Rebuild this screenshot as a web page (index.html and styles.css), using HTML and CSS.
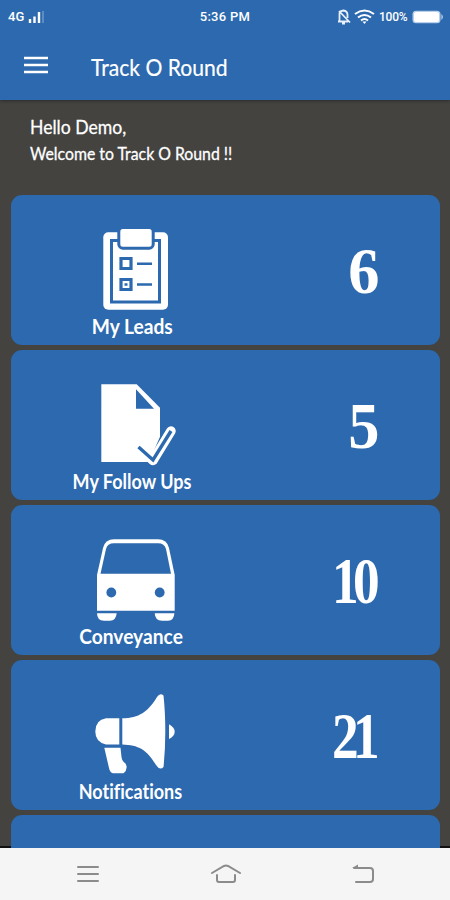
FILE: index.html
```html
<!DOCTYPE html>
<html lang="en">
<head>
<meta charset="utf-8">
<title>Track O Round</title>
<link rel="stylesheet" href="styles.css">
</head>
<body>
<div class="phone">
  <header class="top">
    <div class="status">
      <div class="carrier"><span>4G</span>
        <svg width="16" height="14" viewBox="0 0 16 14"><path d="M2 13V9M6.500 13V6.500M11 13V2" stroke="#fff" stroke-width="2.400"/><path d="M15 13V1" stroke="#6d98ca" stroke-width="1.500"/></svg>
      </div>
      <span class="clock">5:36 PM</span>
      <div class="indicators">
        <svg width="14" height="16" viewBox="0 0 14 16" fill="none" stroke="#e8f1fb" stroke-width="1.800"><path d="M2.500 12.500V4.500Q2.500 2 6.500 1.500Q10.500 2 10.500 6V9M1 12.500H11M5 14.500H8M2 2L13 13.500"/></svg>
        <svg width="21" height="16" viewBox="0 0 21 16" fill="none" stroke="#fff" stroke-width="2"><path d="M1 5Q10.500-2 20 5M4 8.500Q10.500 3.500 17 8.500M7 11.500Q10.500 8.500 14 11.500"/><path d="M8.500 12.500H12.500L10.500 15Z" fill="#fff" stroke="none"/></svg>
        <span class="percent">100%</span>
        <svg width="32" height="14" viewBox="0 0 32 14"><rect x=".5" y=".8" width="28" height="12.400" rx="3.500" fill="#b8d0eb"/><rect x="2" y="2" width="25" height="10" rx="2" fill="#fff"/><path d="M29.500 4Q32 7 29.500 10Z" fill="#dce9f7"/></svg>
      </div>
    </div>
    <div class="appbar">
      <svg class="menu" width="24" height="18" viewBox="0 0 24 18" stroke="#fff" stroke-width="2.600"><path d="M0 2H24M0 9H24M0 16H24"/></svg>
      <h1>Track O Round</h1>
    </div>
  </header>
  <main>
    <section class="greeting">
      <p class="hello">Hello Demo,</p>
      <p class="welcome">Welcome to Track O Round !!</p>
    </section>
    <section class="cards">
      <article class="card">
        <div class="kind">
          <svg class="icon" viewBox="0 0 110 90"><rect x="26.300" y="7.300" width="64.700" height="77.400" rx="5" fill="#fff"/><rect x="34.500" y="15.500" width="48" height="61.500" fill="none" stroke="#2c69ae" stroke-width="3"/><rect x="41.800" y="2.500" width="34.400" height="20.700" rx="4" fill="#fff" stroke="#2c69ae" stroke-width="3"/><path d="M44 33.500H54V43.500H44ZM44 54.500H54V64.500H44Z" fill="none" stroke="#2c69ae" stroke-width="3.200"/><path d="M47.500 59.500H50.500M60 38.700H75M60 59.500H75" stroke="#2c69ae" stroke-width="2.600"/></svg>
          <span class="label leads">My Leads</span>
        </div>
        <strong class="count">6</strong>
      </article>
      <article class="card">
        <div class="kind">
          <svg class="icon" viewBox="0 0 110 90"><path d="M24.300 4.300H59.700L83 27.700V56.700L72 82H24.300Z" fill="#fff"/><path d="M59 9.300V28.700H77Z" fill="#2c69ae"/><path d="M67 72L76 80.500L94 51" fill="none" stroke="#fff" stroke-width="9.500" stroke-linecap="round" stroke-linejoin="round"/><path d="M61.500 67L76 80L94 51" fill="none" stroke="#2c69ae" stroke-width="3.400"/></svg>
          <span class="label follow">My Follow Ups</span>
        </div>
        <strong class="count">5</strong>
      </article>
      <article class="card">
        <div class="kind">
          <svg class="icon" viewBox="0 0 110 90" fill="#fff"><path d="M20 75.700V40L26 13Q28 4.300 37 4.300H81Q90 4.300 92 13L97.700 40V75.700Z"/><path d="M23.500 38.700L29 14Q30.300 8.300 37 8.300H81Q87.500 8.300 89 14L94 38.700Z" fill="#2c69ae"/><circle cx="34.300" cy="57.500" r="4.900" fill="#2c69ae"/><circle cx="82.700" cy="57.500" r="4.900" fill="#2c69ae"/><path d="M20 78.300H39.700Q39 85.700 33 85.700H27Q20 85.700 20 78.300ZM77.700 78.300H97.400Q97 85.700 91 85.700H85Q78 85.700 77.700 78.300Z"/></svg>
          <span class="label conv">Conveyance</span>
        </div>
        <strong class="count two">10</strong>
      </article>
      <article class="card">
        <div class="kind">
          <svg class="icon" viewBox="0 0 110 90" fill="#fff"><path d="M42.300 28.300V54.500H29Q18.300 52 18.300 41.500Q18.300 30 29 28.300ZM45.300 28.300C62 28 71 22 80 7Q83 2.500 86.500 5.500Q88.300 22 88.300 41.500Q88.300 61 86.500 77Q83 81 79 75C70 60 62 55 45.300 54.500ZM92 34.300Q97.700 37.500 97.700 41.700Q97.700 46 92 49ZM27.300 57.700H43.500L44.500 67Q45 71 48.500 73.500Q51.500 79 46.500 83.300H36Q33 83 32 78Z"/></svg>
          <span class="label notif">Notifications</span>
        </div>
        <strong class="count two">21</strong>
      </article>
      <article class="card"></article>
    </section>
  </main>
  <nav>
    <svg width="22" height="18" viewBox="0 0 22 18"><path d="M1 2H21M1 9H21M1 16H21"/></svg>
    <svg width="30" height="20" viewBox="0 0 30 20"><path d="M1 9L13 2Q15 1 17 2L29 9M6 11V16Q6 18 8 18H22Q24 18 24 16V11"/></svg>
    <svg width="22" height="20" viewBox="0 0 22 20"><path d="M2 4H18Q21 4 21 7V15Q21 18 18 18H4"/><path d="M0 4L6 .5V4Z" fill="#8b8b8b" stroke="none"/></svg>
  </nav>
</div>
</body>
</html>
```
FILE: styles.css
```css
* { box-sizing: border-box; margin: 0; padding: 0; }
body { background: #444340; }
svg { display: block; flex: none; }
.phone {
  width: 450px;
  height: 900px;
  display: flex;
  flex-direction: column;
  overflow: hidden;
  background: #444340;
  color: #fff;
  font-family: Lato, sans-serif;
  font-variant-ligatures: none;
  white-space: nowrap;
}
.top { height: 100px; flex: none; background: #2c69ae; box-shadow: 0 1px 3px #292c2e; }
.status {
  height: 33px;
  display: grid;
  grid-template-columns: 150px 150px 150px;
  align-items: center;
  font: 500 12px Roboto, sans-serif;
}
.carrier { display: flex; align-items: center; gap: 4px; padding-left: 8px; font-size: 13px; }
.clock { justify-self: center; font-size: 13px; letter-spacing: .3px; }
.indicators { display: flex; align-items: center; padding-left: 37px; }
.indicators svg:nth-child(2) { margin-left: 3px; }
.percent { width: 28px; margin: 0 5px 0 4px; letter-spacing: -.2px; }
.appbar { height: 66px; display: flex; align-items: center; padding-left: 24px; }
.menu { margin-top: -2px; }
h1 { margin-left: 43px; font-size: 24px; font-weight: 400; -webkit-text-stroke: .2px #fff; transform: scaleX(.88); transform-origin: left; }
main {
  flex: 1;
  min-height: 0;
  overflow: hidden;
  background: linear-gradient(#111, #111) bottom / 100% 2px no-repeat;
}
.greeting { height: 95px; padding: 14px 0 0 30px; }
.hello, .welcome { transform-origin: left; }
.hello { font-size: 20px; line-height: 25px; -webkit-text-stroke: .3px #fff; transform: scaleX(.88); }
.welcome { font-size: 17px; line-height: 29px; -webkit-text-stroke: .3px #fff; transform: scaleX(.93); }
.cards { display: grid; gap: 5px; padding: 0 10px 0 11px; }
.card {
  height: 150px;
  border-radius: 11px;
  background: #2c69ae;
  display: flex;
  justify-content: space-between;
}
.kind { width: 242px; padding-top: 30px; display: flex; flex-direction: column; align-items: center; }
.icon { width: 110px; height: 90px; }
.label { margin-top: -1px; font-size: 20px; font-weight: 700; line-height: 24px; }
.leads { transform: scaleX(.96); }
.follow { transform: scaleX(.9); }
.conv { margin-left: -2px; transform: scaleX(.96); }
.notif { margin-left: -3px; transform: scaleX(.9); }
.count {
  padding-right: 61px;
  font: 700 65px/152px "Liberation Serif", serif;
  transform: scaleX(.96);
  transform-origin: calc(100% - 62px) 50%;
}
.two {
  padding-right: 67px;
  letter-spacing: -7px;
  transform: scaleX(.82);
  transform-origin: calc(100% - 62px) 50%;
}
nav {
  height: 52px;
  flex: none;
  display: flex;
  justify-content: space-between;
  align-items: center;
  padding: 0 76px 0 77px;
  background: #f5f5f5;
  fill: none;
  stroke: #8b8b8b;
  stroke-width: 2;
  stroke-linecap: round;
}
```
